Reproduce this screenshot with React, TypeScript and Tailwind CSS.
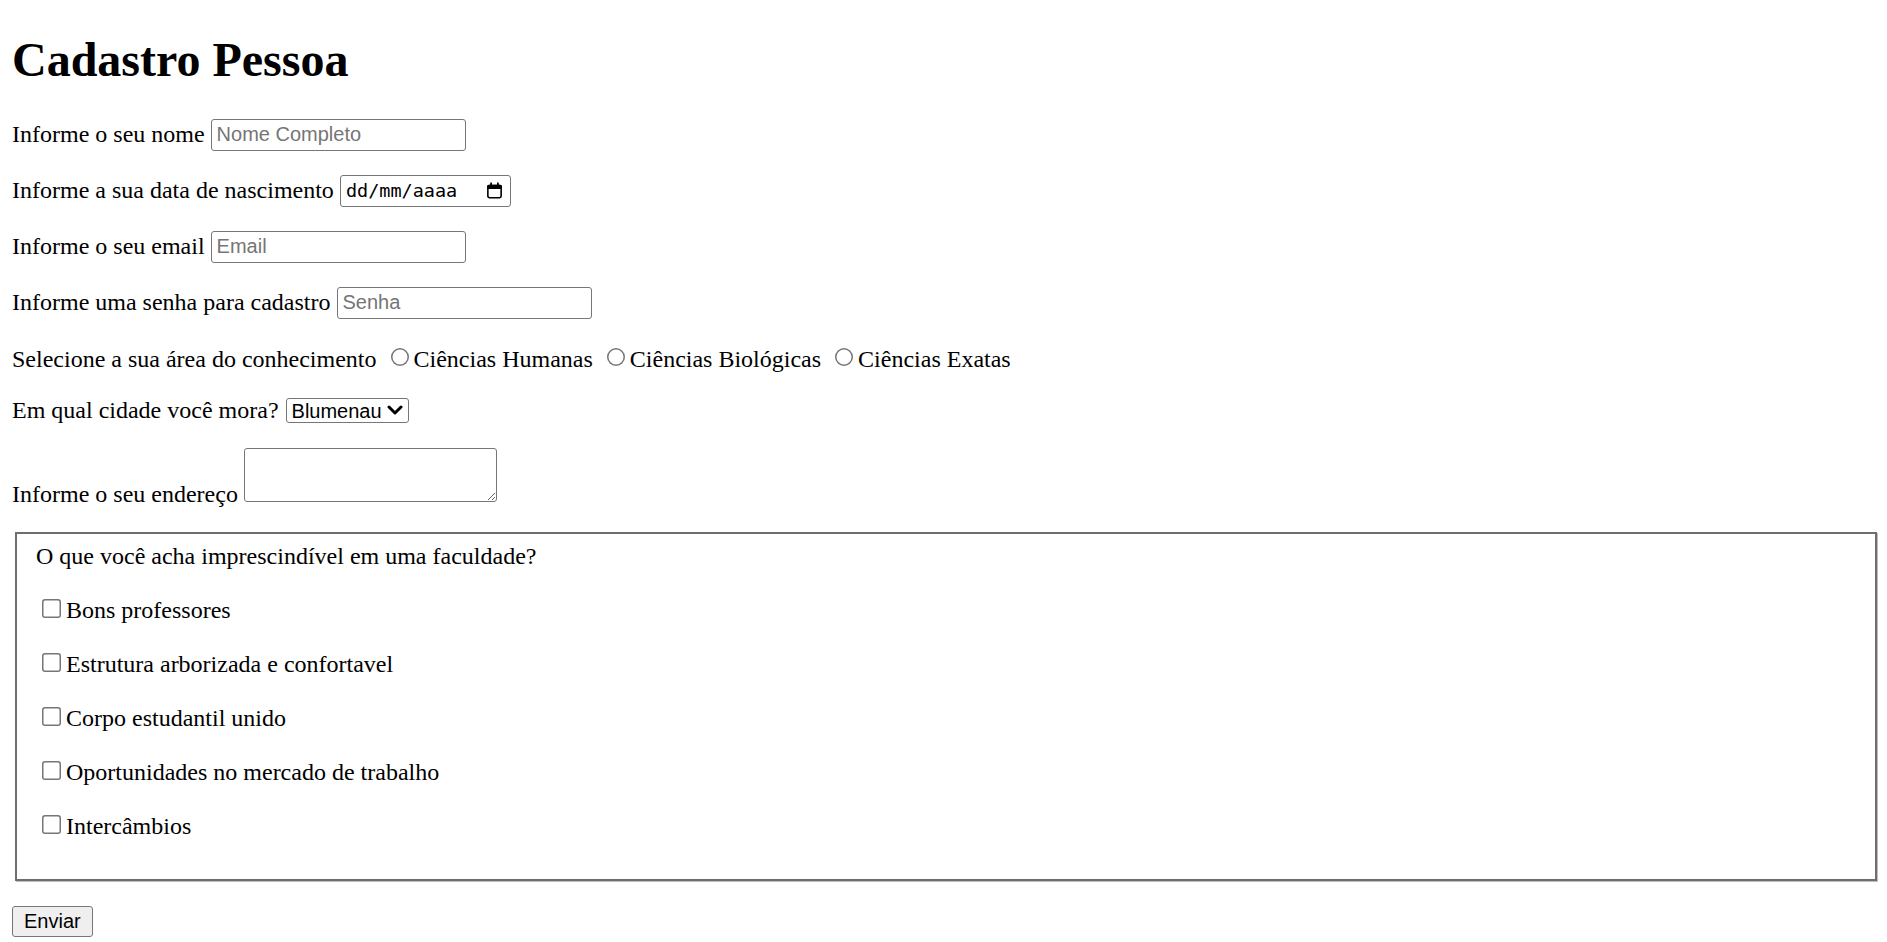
import React from 'react';

const textInput =
  "appearance-none w-[255px] h-[32px] border border-[#767676] rounded-[3px] pl-[5px] pr-[5px] bg-white font-['Liberation_Sans',Arial,sans-serif] text-[20px] leading-[normal] text-black placeholder:text-[#757575] align-baseline outline-none";

const radioCls =
  "appearance-none w-[18px] h-[18px] rounded-full shadow-[inset_0_0_0_1.5px_#767676] bg-white ml-[8px] mr-[5px] mt-[5px] mb-0 align-[1px]";

const checkCls =
  "appearance-none w-[19px] h-[19px] rounded-[3px] shadow-[inset_0_0_0_1.5px_#767676] bg-white ml-[6px] mr-[5px] mt-[5px] mb-0 align-baseline";

function CalendarIcon() {
  return (
    <svg width="17" height="17" viewBox="0 0 16 16" aria-hidden="true">
      <rect x="1.75" y="3.25" width="12.5" height="11.5" rx="1.5" fill="none" stroke="black" strokeWidth="1.5" />
      <rect x="1" y="2.5" width="14" height="4" rx="1.5" fill="black" />
      <rect x="4" y="0.5" width="1.6" height="3" fill="black" />
      <rect x="10.4" y="0.5" width="1.6" height="3" fill="black" />
    </svg>
  );
}

function Chevron() {
  return (
    <svg width="16" height="10" viewBox="0 0 16 10" aria-hidden="true">
      <path d="M2 2 L8 8 L14 2" fill="none" stroke="black" strokeWidth="3" strokeLinecap="round" strokeLinejoin="round" />
    </svg>
  );
}

const itens = [
  'Bons professores',
  'Estrutura arborizada e confortavel',
  'Corpo estudantil unido',
  'Oportunidades no mercado de trabalho',
  'Intercâmbios',
];

export default function App() {
  return (
    <div className="mx-[12px] my-[12px] font-['Liberation_Serif','Times_New_Roman',serif] text-[24px] leading-[normal] text-black bg-white">
      <h1 className="mt-[32px] mb-[31.6px] text-[48px] font-bold leading-[normal]">Cadastro Pessoa</h1>
      <form onSubmit={(e) => e.preventDefault()}>
        <p className="my-[24px]">
          <label htmlFor="nome">Informe o seu nome</label>{' '}
          <input id="nome" type="text" placeholder="Nome Completo" className={textInput} />
        </p>
        <p className="my-[24px]">
          <label>Informe a sua data de nascimento</label>{' '}
          <span className="inline-flex items-center justify-between w-[171px] h-[32px] border border-[#767676] rounded-[3px] pl-[5px] pr-[7px] bg-white align-baseline">
            <span className="font-['DejaVu_Sans_Mono','Liberation_Mono',monospace] text-[18.5px] leading-[normal] text-black">dd/mm/aaaa</span>
            <CalendarIcon />
          </span>
        </p>
        <p className="my-[24px]">
          <label htmlFor="email">Informe o seu email</label>{' '}
          <input id="email" type="email" placeholder="Email" className={textInput} />
        </p>
        <p className="my-[24px]">
          <label htmlFor="senha">Informe uma senha para cadastro</label>{' '}
          <input id="senha" type="password" placeholder="Senha" className={textInput} />
        </p>
        <p className="my-[24px]">
          <label>Selecione a sua área do conhecimento</label>{' '}
          <input type="radio" name="area" className={radioCls} />
          Ciências Humanas{' '}
          <input type="radio" name="area" className={radioCls} />
          Ciências Biológicas{' '}
          <input type="radio" name="area" className={radioCls} />
          Ciências Exatas
        </p>
        <p className="my-[24px]">
          <label htmlFor="cidade">Em qual cidade você mora?</label>{' '}
          <span className="relative inline-block ml-[1px] align-baseline">
            <select
              id="cidade"
              defaultValue="Blumenau"
              className="appearance-none h-[25px] w-[123px] border border-[#767676] rounded-[3px] pl-[5px] pr-[24px] bg-white font-['Liberation_Sans',Arial,sans-serif] text-[20px] leading-[normal] text-black outline-none"
            >
              <option>Blumenau</option>
              <option>Gaspar</option>
              <option>Indaial</option>
            </select>
            <span className="pointer-events-none absolute right-[6px] top-[8px] flex">
              <Chevron />
            </span>
          </span>
        </p>
        <p className="my-[24px]">
          <label htmlFor="endereco">Informe o seu endereço</label>{' '}
          <textarea
            id="endereco"
            className="w-[253px] h-[54px] border border-[#767676] rounded-[3px] bg-white resize align-baseline outline-none"
          />
        </p>
        <fieldset className="ml-[3px] mr-[-2px] border-2 border-[#6e6e6e] pl-[19px] pr-[19px] pt-[9.4px] pb-[15px] shadow-[1px_1px_0_0_#bdbdbd]">
          <div>O que você acha imprescindível em uma faculdade?</div>
          {itens.map((t) => (
            <p key={t} className="my-[24px]">
              <label>
                <input type="checkbox" className={checkCls} />
                {t}
              </label>
            </p>
          ))}
        </fieldset>
        <p className="mt-[25px] mb-[24px]">
          <button
            type="submit"
            className="h-[31px] px-[11px] bg-[#efefef] border border-[#767676] rounded-[3px] font-['Liberation_Sans',Arial,sans-serif] text-[20px] leading-[normal] text-black align-baseline"
          >
            Enviar
          </button>
        </p>
      </form>
    </div>
  );
}
